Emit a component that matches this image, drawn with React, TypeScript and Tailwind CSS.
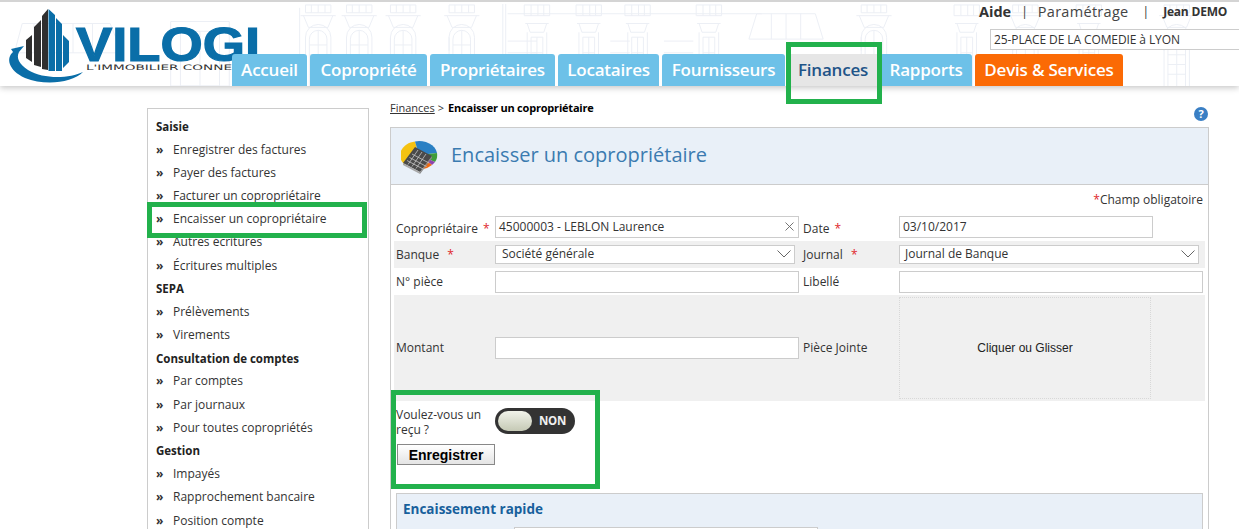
const tabs = [
  { label: "Accueil", w: "w-[75px]" },
  { label: "Copropriété", w: "w-[117px]" },
  { label: "Propriétaires", w: "w-[125px]" },
  { label: "Locataires", w: "w-[101px]" },
  { label: "Fournisseurs", w: "w-[123px]" },
];

const menu = [
  { title: "Saisie", items: ["Enregistrer des factures", "Payer des factures", "Facturer un copropriétaire", "Encaisser un copropriétaire", "Autres écritures", "Écritures multiples"] },
  { title: "SEPA", items: ["Prélèvements", "Virements"] },
  { title: "Consultation de comptes", items: ["Par comptes", "Par journaux", "Pour toutes copropriétés"] },
  { title: "Gestion", items: ["Impayés", "Rapprochement bancaire", "Position compte"] },
];

function Facade() {
  const arched = [311, 353, 398, 458, 880, 1035, 1190];
  const square = [535, 588, 638, 711, 975, 1100];
  return (
    <svg className="absolute inset-0 h-full w-full" viewBox="0 0 1239 86" fill="none" stroke="#eceff5" strokeWidth="1">
      <path d="M8 22h90l12 30H0z M20 22v30 M40 22v30 M60 22v30 M80 22v30" />
      <path d="M760 12h60l8 26h-76z M775 12v26 M790 12v26 M805 12v26" />
      <path d="M160 20h60v66h-60z M170 30h40v56h-40z M190 30v56" />
      <path d="M292 6v80 M500 2v84 M503 2v84 M505 12h260 M505 70h30 M505 40h30 M505 52h30 M505 62h30 M610 40h20 M610 52h20 M610 62h20 M665 40h30 M665 52h30" />
      {arched.map((x) => (
        <g key={x}>
          <path d={`M${x - 13} 50V36a13 13 0 0 1 26 0v50 M${x - 13} 36v50`} />
          <path d={`M${x - 9} 86V38a9 9 0 0 1 18 0v48 M${x} 29v57 M${x - 9} 44h18 M${x - 9} 54h18 M${x - 9} 64h18 M${x - 9} 74h18`} />
          <path d={`M${x - 18} 14h36 M${x - 15} 14l5 12h20l5-12 M${x - 13} 3h26v8h-26z M${x - 7} 3v8 M${x} 3v8 M${x + 7} 3v8`} />
        </g>
      ))}
      {square.map((x) => (
        <g key={x}>
          <path d={`M${x - 12} 22h24 M${x - 10} 22l3 9h14l3-9 M${x - 10} 31v55 M${x + 10} 31v55 M${x - 6} 36h12v50h-12z M${x} 36v50 M${x - 6} 52h12 M${x - 6} 68h12`} />
          <path d={`M${x - 13} 3h26v11h-26z M${x - 6} 3v11 M${x + 1} 3v11 M${x + 7} 3v11`} />
        </g>
      ))}
    </svg>
  );
}

function Logo() {
  return (
    <svg className="ml-[8px] mt-[8px] h-[72px] w-[260px] shrink-0 overflow-visible" viewBox="8 10 260 72">
      <path d="M26 40L32 35V62L26 58Z M34 27L41 20V67L34 65Z M42 16L48 9V70L42 69Z" fill="#2f2f2f" />
      <path d="M48.5 9L55 15V71H48.5Z M56 18L62 24V71H56Z M63 35L69 41V62L63 68Z" fill="#0a6ea8" />
      <path d="M11 49L24 46L19 52C16 58 19 64 28 70C45 80 70 78 83 72C72 83 45 86 25 78C8 70 6 58 13 52Z" fill="#0a6ea8" />
      <text x="76" y="61" fontFamily="Liberation Sans" fontWeight="700" fontSize="48" fill="#0a6ea8" stroke="#0a6ea8" strokeWidth="1.2" textLength="184" lengthAdjust="spacingAndGlyphs">VILOGI</text>
      <text x="86" y="70" fontFamily="DejaVu Sans" fontSize="7.5" fill="#333" textLength="146" lengthAdjust="spacingAndGlyphs">L'IMMOBILIER CONNE</text>
    </svg>
  );
}

function CalcIcon() {
  return (
    <svg className="mt-[6px] h-[36px] w-[38px] shrink-0" viewBox="0 0 38 36">
      <path d="M18 15L3 24A18 14 0 0 1 14 1.500Z" fill="#f5c211" />
      <path d="M18 15L14 1.500A18 14 0 0 1 36 13Z" fill="#2a80c4" />
      <path d="M18 15L36 13A18 14 0 0 1 34 22Z" fill="#3f9d3a" />
      <path d="M18 15L34 22A18 14 0 0 1 31 25Z" fill="#8e44ad" />
      <path d="M18 15L31 25A18 14 0 0 1 22 29Z" fill="#ee6a12" />
      <path d="M14 7L31 16L19 32L2 23Z" fill="#4a4a4a" />
      <path d="M2 23L19 32L19 34L2 25Z" fill="#a8a8a8" />
      <path d="M19 32L31 16L31 18L19 34Z" fill="#8a8a8a" />
      <path d="M6 20.500L23 29.500M8.500 17.500L25.500 26.500M11 14L28 23M7 24.500L17 10M11 26.500L21 12M15 28.500L25 14" stroke="#c4c4c4" strokeWidth="0.8" />
    </svg>
  );
}

function Req() {
  return <span className="ml-[5px] text-[#e0262c]">*</span>;
}

function Field({ className, value, icon }: { className: string; value?: string; icon?: "x" | "down" }) {
  return (
    <div className={`${className} flex items-center justify-between border border-[#cccccc] bg-white pb-[1px] pr-[3px] text-[12px] text-[#333]`}>
      <span>{value}</span>
      {icon === "x" && (
        <svg className="mr-[1px] h-[9px] w-[9px]" viewBox="0 0 9 9" fill="none" stroke="#666" strokeWidth="0.9">
          <path d="M0.500 0.500L8.500 8.500M8.500 0.500L0.500 8.500" />
        </svg>
      )}
      {icon === "down" && (
        <svg className="h-[8px] w-[14px]" viewBox="0 0 14 8" fill="none" stroke="#555" strokeWidth="0.9">
          <path d="M0.500 0.500L7 7L13.500 0.500" />
        </svg>
      )}
    </div>
  );
}

export default function App() {
  return (
    <div className="relative h-[529px] w-[1239px] overflow-hidden bg-white font-['Open_Sans',sans-serif] text-[#333]">
      <header className="relative h-[86px] border-t-2 border-[#d4d4d4] bg-white shadow-[0_2px_6px_rgba(0,0,0,0.22)]">
        <Facade />
        <div className="relative flex h-[52px]">
          <Logo />
          <div className="ml-auto flex w-[260px] flex-col items-end">
            <div className="flex h-[19px] w-full items-center text-[#333]">
              <span className="text-[14.5px] font-bold">Aide</span>
              <span className="ml-[10px] text-[12px]">|</span>
              <span className="ml-[10px] text-[14.5px] tracking-[0.3px] text-[#444]">Paramétrage</span>
              <span className="ml-[14px] text-[12px]">|</span>
              <span className="ml-[14px] text-[12px] font-bold tracking-[-0.2px]">Jean DEMO</span>
            </div>
            <div className="mt-[8px] flex h-[21px] w-[249px] items-center border-y border-l border-[#cccccc] bg-white pl-[3px] text-[12px] tracking-[-0.1px]">
              25-PLACE DE LA COMEDIE à LYON
            </div>
          </div>
        </div>
        <nav className="relative ml-[232px] flex h-[32px] text-[17px] font-semibold tracking-[-0.2px]">
          {tabs.map((t) => (
            <div key={t.label} className={`${t.w} mr-[3px] flex items-center justify-center rounded-t-[3px] bg-[#6dc1e8] text-white`}>
              {t.label}
            </div>
          ))}
          <div className="flex w-[92px] items-center justify-center bg-[#e6e6e6] pr-[2px] text-[#1f5488]">Finances</div>
          <div className="mr-[3px] flex w-[92px] items-center justify-center rounded-t-[3px] bg-[#6dc1e8] text-white">Rapports</div>
          <div className="flex w-[148px] items-center justify-center rounded-t-[3px] bg-[#fb6a05] text-white">Devis &amp; Services</div>
        </nav>
      </header>

      <div className="flex pl-[147px] pt-[14px]">
        <aside className="mt-[8px] h-[500px] w-[222px] shrink-0 border border-[#cccccc] pl-[8px] pt-[6px] text-[12px] text-[#333]">
          {menu.map((g) => (
            <div key={g.title}>
              <div className="flex h-[23.18px] items-center text-[11.5px] font-bold text-[#222]">{g.title}</div>
              {g.items.map((it) => (
                <div key={it} className="flex h-[23.18px] items-center">
                  <span className="w-[17px] text-[12px] font-bold text-[#333]">»</span>
                  <span>{it}</span>
                </div>
              ))}
            </div>
          ))}
        </aside>

        <main className="ml-[21px] w-[819px] shrink-0">
          <div className="flex h-[16px] items-center text-[11px]">
            <span className="underline">Finances</span>
            <span className="ml-[3px]">&gt;</span>
            <span className="ml-[4px] font-bold tracking-[-0.2px] text-black">Encaisser un copropriétaire</span>
            <span className="ml-auto mr-[1px] mt-[12px] flex h-[14px] w-[14px] items-center justify-center rounded-full bg-[#3a7fc4] text-[11px] font-bold text-white">?</span>
          </div>
          <section className="mt-[11px] h-[420px] border border-[#cccccc]">
            <div className="flex h-[57px] items-center border-b border-[#cccccc] bg-[#e9f0f8] pb-[2px] pl-[10px]">
              <CalcIcon />
              <h1 className="ml-[12px] text-[20px] text-[#3b7bb0]">Encaisser un copropriétaire</h1>
            </div>

            <div className="flex h-[30px] items-center justify-end pr-[5px] text-[12px]">
              <span className="text-[#e0262c]">*</span>Champ obligatoire
            </div>

            <div className="mx-[3px] grid h-[26px] grid-cols-[101px_308px_96px_1fr] items-start pt-[1px] text-[12px]">
              <div className="flex h-[25px] items-center pl-[2px]">Copropriétaire <Req /></div>
              <Field className="h-[22px] w-[304px] pl-[3px]" value="45000003 - LEBLON Laurence" icon="x" />
              <div className="flex h-[25px] items-center">Date <Req /></div>
              <Field className="h-[22px] w-[254px] pl-[3px]" value="03/10/2017" />
            </div>
            <div className="mx-[3px] grid h-[27px] grid-cols-[101px_308px_96px_1fr] items-center bg-[#f0f0f0] text-[12px]">
              <div className="pl-[2px]">Banque <Req /></div>
              <Field className="h-[19px] w-[300px] pl-[6px]" value="Société générale" icon="down" />
              <div>Journal <Req /></div>
              <Field className="h-[19px] w-[300px] pl-[5px]" value="Journal de Banque" icon="down" />
            </div>
            <div className="mx-[3px] grid h-[27px] grid-cols-[101px_308px_96px_1fr] items-center text-[12px]">
              <div className="pl-[2px]">N° pièce</div>
              <Field className="h-[22px] w-[304px]" />
              <div>Libellé</div>
              <Field className="h-[22px] w-[304px]" />
            </div>
            <div className="mx-[3px] grid h-[106px] grid-cols-[101px_308px_96px_1fr] items-center bg-[#f0f0f0] text-[12px]">
              <div className="pl-[2px]">Montant</div>
              <Field className="h-[22px] w-[304px]" />
              <div>Pièce Jointe</div>
              <div className="flex h-[102px] w-[252px] items-center justify-center border border-dotted border-[#d8d8d8] font-['Liberation_Sans',sans-serif] text-[12px] text-[#222]">
                Cliquer ou Glisser
              </div>
            </div>

            <div className="grid grid-cols-[99px_1fr] px-[5px] pt-[5px] text-[12px]">
              <div className="pt-[1px] leading-[15px]">Voulez-vous un reçu ?</div>
              <div className="mt-[2px] flex h-[26px] w-[80px] items-center rounded-full bg-[#333] p-[3px]">
                <div className="h-[20px] w-[34px] rounded-full bg-gradient-to-b from-[#f1f3ea] to-[#c5c9b5]" />
                <span className="ml-[7px] text-[11.5px] font-bold tracking-[-0.3px] text-[#f0f0f0]">NON</span>
              </div>
            </div>
            <button className="ml-[6px] mt-[7px] block h-[21px] w-[98px] border border-[#888] bg-gradient-to-b from-white to-[#e4e4e4] font-['Liberation_Sans',sans-serif] text-[14px] font-bold text-black">
              Enregistrer
            </button>

            <div className="mx-[5px] mt-[28px] h-[60px] border border-[#cccccc] bg-[#e9f0f8] pl-[6px] pt-[5px]">
              <h2 className="text-[13.5px] font-bold text-[#17609c]">Encaissement rapide</h2>
              <div className="ml-[111px] mt-[8px] h-[22px] w-[304px] border border-[#cccccc] bg-white" />
            </div>
          </section>
        </main>
      </div>

      <div className="absolute left-[786px] top-[42px] h-[62px] w-[96px] border-[5px] border-[#22b14c]" />
      <div className="absolute left-[147px] top-[202px] h-[36px] w-[220px] border-[5px] border-[#22b14c]" />
      <div className="absolute left-[391px] top-[390px] h-[99px] w-[209px] border-[5px] border-[#22b14c]" />
    </div>
  );
}
